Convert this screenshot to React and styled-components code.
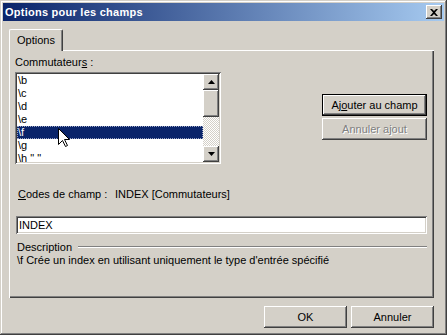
import styled, { createGlobalStyle } from "styled-components";

const GlobalStyle = createGlobalStyle`
  html, body { margin: 0; padding: 0; background: #d4d0c8; }
  * { box-sizing: border-box; }
`;

const raised = `
  box-shadow: inset -1px -1px #404040, inset 1px 1px #ffffff,
    inset -2px -2px #808080, inset 2px 2px #d4d0c8;
`;

const sunken = `
  box-shadow: inset 1px 1px #808080, inset -1px -1px #ffffff,
    inset 2px 2px #404040, inset -2px -2px #d4d0c8;
`;

const switches = ["\\b", "\\c", "\\d", "\\e", "\\f", "\\g", '\\h " "'];

const App = () => {
  return (
    <>
      <GlobalStyle />
      <Window>
        <TitleBar>
          <Title>Options pour les champs</Title>
          <CloseButton>
            <svg width="8" height="7" viewBox="0 0 8 7">
              <path d="M0 0h2l2 2 2-2h2L5 3.5 8 7H6L4 5 2 7H0l3-3.5z" fill="#000" />
            </svg>
          </CloseButton>
        </TitleBar>

        <Body>
          <TabStrip>
            <Tab>Options</Tab>
          </TabStrip>
          <Panel>
            <TopRow>
              <div>
                <Label>
                  Commutateur<u>s</u> :
                </Label>
                <ListBox>
                  <Rows>
                    {switches.map((s) => (
                      <Row key={s} selected={s === "\\f"}>
                        {s}
                      </Row>
                    ))}
                  </Rows>
                  <ScrollBar>
                    <ArrowButton>
                      <svg width="7" height="4" viewBox="0 0 7 4">
                        <polygon points="3.5,0 7,4 0,4" fill="#000" />
                      </svg>
                    </ArrowButton>
                    <Thumb />
                    <Track />
                    <ArrowButton>
                      <svg width="7" height="4" viewBox="0 0 7 4">
                        <polygon points="0,0 7,0 3.5,4" fill="#000" />
                      </svg>
                    </ArrowButton>
                  </ScrollBar>
                  <Cursor width="12" height="20" viewBox="0 0 12 20">
                    <path
                      d="M0.5 0.5 L0.5 16.5 L4.5 12.5 L7.5 18.5 L9.5 17.5 L6.5 11.5 L11.5 11.5 Z"
                      fill="#fff"
                      stroke="#000"
                      strokeWidth="1"
                    />
                  </Cursor>
                </ListBox>
              </div>
              <SideButtons>
                <Button width={105} isDefault>
                  Aj<u>o</u>uter au champ
                </Button>
                <Button width={105} disabled>
                  Annuler ajout
                </Button>
              </SideButtons>
            </TopRow>

            <CodesRow>
              <CodesLabel>
                <u>C</u>odes de champ :
              </CodesLabel>
              <span>INDEX [Commutateurs]</span>
            </CodesRow>

            <TextInput>INDEX</TextInput>

            <GroupHeader>
              <span>Description</span>
              <Etched />
            </GroupHeader>
            <DescText>
              \f Crée un index en utilisant uniquement le type d'entrée spécifié
            </DescText>
          </Panel>

          <Footer>
            <Button width={83}>OK</Button>
            <Button width={83}>Annuler</Button>
          </Footer>
        </Body>
      </Window>
    </>
  );
};

const Window = styled.div`
  width: 447px;
  height: 335px;
  padding: 3px;
  background: #d4d0c8;
  box-shadow: inset -1px -1px #404040, inset 1px 1px #d4d0c8,
    inset -2px -2px #808080, inset 2px 2px #ffffff;
  display: flex;
  flex-direction: column;
  font-family: "Liberation Sans", Arial, sans-serif;
  font-size: 11px;
  color: #000;
`;

const TitleBar = styled.div`
  height: 18px;
  display: flex;
  align-items: center;
  justify-content: space-between;
  padding: 0 2px;
  background: linear-gradient(to right, #0a246a, #a6caf0);
`;

const Title = styled.span`
  color: #fff;
  font-weight: bold;
  font-size: 11px;
  letter-spacing: 0.25px;
`;

const CloseButton = styled.div`
  width: 16px;
  height: 14px;
  background: #d4d0c8;
  display: flex;
  align-items: center;
  justify-content: center;
  ${raised}
`;

const Body = styled.div`
  flex: 1;
  display: flex;
  flex-direction: column;
  padding: 8px 10px 0 6px;
`;

const TabStrip = styled.div`
  display: flex;
  height: 21px;
`;

const Tab = styled.div`
  position: relative;
  z-index: 1;
  width: 54px;
  height: 22px;
  display: flex;
  align-items: center;
  justify-content: center;
  background: #d4d0c8;
  border-top: 1px solid #fff;
  border-left: 1px solid #fff;
  border-right: 1px solid #404040;
  box-shadow: inset -1px 0 #808080;
  border-radius: 2px 2px 0 0;
  padding-bottom: 1px;
`;

const Panel = styled.div`
  height: 248px;
  padding: 6px 7px 0 6px;
  box-shadow: inset 1px 1px #fff, inset -1px -1px #404040,
    inset -2px -2px #808080;
  display: flex;
  flex-direction: column;
`;

const TopRow = styled.div`
  display: flex;
  justify-content: space-between;
`;

const Label = styled.div`
  height: 13px;
  line-height: 13px;
  margin-bottom: 3px;
`;

const ListBox = styled.div`
  position: relative;
  width: 206px;
  height: 92px;
  background: #fff;
  padding: 2px;
  display: flex;
  overflow: hidden;
  ${sunken}
`;

const Rows = styled.div`
  flex: 1;
  display: flex;
  flex-direction: column;
`;

const Row = styled.div`
  height: 13px;
  line-height: 13px;
  flex-shrink: 0;
  padding-left: 1px;
  background: ${({ selected }) => (selected ? "#0a246a" : "transparent")};
  color: ${({ selected }) => (selected ? "#fff" : "#000")};
  outline: ${({ selected }) => (selected ? "1px dotted #9aa4c4" : "none")};
  outline-offset: -1px;
`;

const ScrollBar = styled.div`
  width: 16px;
  display: flex;
  flex-direction: column;
`;

const ArrowButton = styled.div`
  width: 16px;
  height: 16px;
  flex-shrink: 0;
  background: #d4d0c8;
  display: flex;
  align-items: center;
  justify-content: center;
  ${raised}
`;

const Thumb = styled.div`
  height: 27px;
  flex-shrink: 0;
  background: #d4d0c8;
  ${raised}
`;

const Track = styled.div`
  flex: 1;
  background: repeating-conic-gradient(#ffffff 0 25%, #d4d0c8 0 50%) 0 0 / 2px
    2px;
`;

const Cursor = styled.svg`
  position: absolute;
  left: 43px;
  top: 56px;
`;

const SideButtons = styled.div`
  display: flex;
  flex-direction: column;
  gap: 2px;
  padding-top: 38px;
`;

const Button = styled.div`
  width: ${({ width }) => width}px;
  height: 22px;
  display: flex;
  align-items: center;
  justify-content: center;
  background: #d4d0c8;
  color: ${({ disabled }) => (disabled ? "#808080" : "#000")};
  text-shadow: ${({ disabled }) => (disabled ? "1px 1px #fff" : "none")};
  border: ${({ isDefault }) => (isDefault ? "1px solid #000" : "none")};
  ${raised}
`;

const CodesRow = styled.div`
  display: flex;
  height: 13px;
  line-height: 13px;
  margin-top: 24px;
  padding-left: 3px;
`;

const CodesLabel = styled.span`
  width: 97px;
`;

const TextInput = styled.div`
  margin: 15px 0 0 1px;
  width: 411px;
  height: 18px;
  line-height: 18px;
  padding: 0 3px;
  background: #fff;
  ${sunken}
`;

const GroupHeader = styled.div`
  display: flex;
  align-items: center;
  gap: 6px;
  height: 13px;
  margin: 6px 0 0 2px;
  width: 410px;
`;

const Etched = styled.div`
  flex: 1;
  height: 2px;
  border-top: 1px solid #808080;
  border-bottom: 1px solid #fff;
  margin-top: 1px;
`;

const DescText = styled.div`
  margin: 1px 0 0 2px;
  height: 13px;
  line-height: 13px;
`;

const Footer = styled.div`
  display: flex;
  justify-content: flex-end;
  gap: 4px;
  margin-top: 8px;
`;

export default App;
